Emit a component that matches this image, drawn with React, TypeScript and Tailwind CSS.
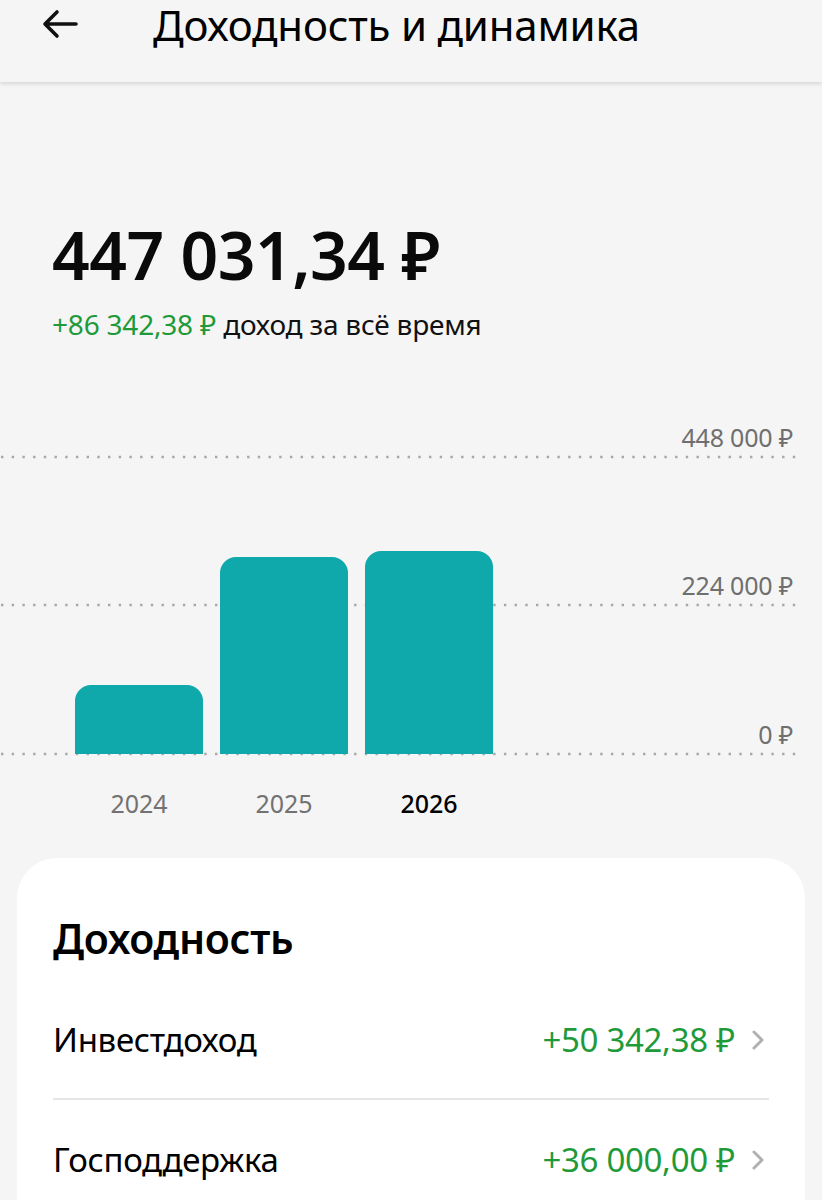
import React from "react";

const font = { fontFamily: "'Noto Sans', Roboto, sans-serif" } as React.CSSProperties;

function Dotted({ top }: { top: number }) {
  return (
    <svg className="absolute left-0" style={{ top: top - 2 }} width="800" height="4">
      <line x1="1" y1="2" x2="800" y2="2" stroke="#a8a8a8" strokeWidth="2.4" strokeDasharray="2.4 8.3" />
    </svg>
  );
}

function Row({ label, value }: { label: string; value: string }) {
  return (
    <div className="flex items-center justify-between h-[60px]">
      <span className="text-[33px] text-black tracking-[-0.3px]">{label}</span>
      <div className="flex items-center gap-[14px] pr-[2px]">
        <span className="text-[33px] text-[#1f9a3a] tracking-[-0.3px]">{value}</span>
        <svg width="18" height="26" viewBox="0 0 18 26">
          <path d="M5 5 L13 13 L5 21" fill="none" stroke="#b0b0b0" strokeWidth="3" strokeLinecap="round" strokeLinejoin="round" />
        </svg>
      </div>
    </div>
  );
}

const grid = [
  { label: "448 000 ₽", y: 57 },
  { label: "224 000 ₽", y: 205 },
  { label: "0 ₽", y: 354 },
];

const bars = [
  { year: "2024", top: 285, left: 75, active: false },
  { year: "2025", top: 157, left: 220, active: false },
  { year: "2026", top: 151, left: 365, active: true },
];

function Chart() {
  return (
    <div className="relative h-[440px]">
      {grid.map((g) => (
        <React.Fragment key={g.label}>
          <Dotted top={g.y} />
          <div className="absolute right-[29px] text-[25px] leading-[30px] text-[#6f6f6f] tracking-[-0.2px]" style={{ top: g.y - 35 }}>
            {g.label}
          </div>
        </React.Fragment>
      ))}
      {bars.map((b) => (
        <React.Fragment key={b.year}>
          <div
            className="absolute w-[128px] bg-[#0fa8ab] rounded-t-[16px]"
            style={{ left: b.left, top: b.top, height: 354 - b.top }}
          />
          <div
            className={
              "absolute w-[128px] text-center text-[25px] leading-[30px] " +
              (b.active ? "text-black font-medium" : "text-[#727272]")
            }
            style={{ left: b.left, top: 388 }}
          >
            {b.year}
          </div>
        </React.Fragment>
      ))}
    </div>
  );
}

export default function App() {
  return (
    <div className="w-[822px] h-[1200px] overflow-hidden bg-[#f5f5f5]" style={font}>
      <header className="h-[82px] bg-[#f5f5f5] shadow-[0_2px_4px_rgba(0,0,0,0.12)] relative z-10 flex items-start">
        <div className="w-[153px] flex pl-[40px] pt-[8px]">
          <svg width="40" height="32" viewBox="0 0 40 32">
            <path d="M36 16 H6 M17 4 L5 16 L17 28" fill="none" stroke="#111" strokeWidth="3.6" strokeLinecap="round" strokeLinejoin="round" />
          </svg>
        </div>
        <h1 className="text-[42px] leading-[50px] text-black tracking-[-0.2px]">Доходность и динамика</h1>
      </header>

      <div className="pl-[52px] pt-[130px] h-[318px]">
        <div className="text-[66px] leading-[84px] font-semibold text-[#0a0a0a] tracking-[-0.5px]">447 031,34 ₽</div>
        <div className="mt-[10px] text-[28px] leading-[36px] text-[#111] tracking-[-0.2px]">
          <span className="text-[#1f9a3a]">+86 342,38 ₽</span> доход за всё время
        </div>
      </div>

      <Chart />

      <div className="mx-[17px] mt-[18px] h-[400px] bg-white rounded-t-[40px] px-[36px] pt-[54px]">
        <h2 className="text-[41px] leading-[52px] font-semibold text-black tracking-[-0.3px]">Доходность</h2>
        <div className="mt-[46px]">
          <Row label="Инвестдоход" value="+50 342,38 ₽" />
        </div>
        <div className="h-[2px] bg-[#e6e6e6] mt-[28px] mb-[30px]" />
        <Row label="Господдержка" value="+36 000,00 ₽" />
      </div>
    </div>
  );
}
